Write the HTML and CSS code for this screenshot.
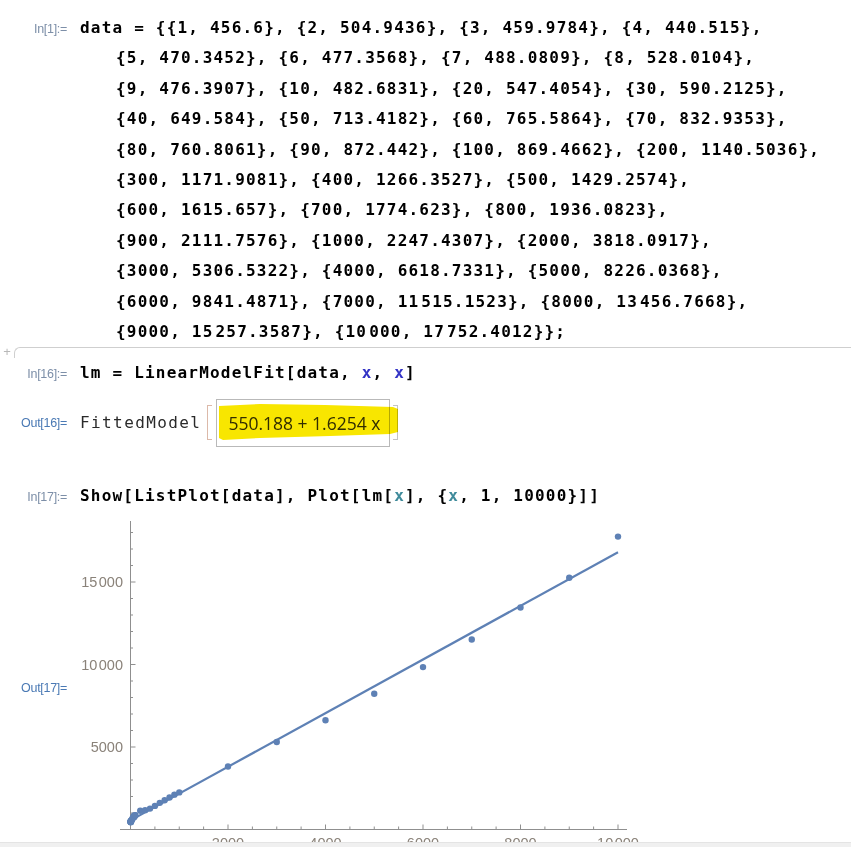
FILE: index.html
```html
<!DOCTYPE html>
<html>
<head>
<meta charset="utf-8">
<link rel="stylesheet" href="styles.css">
</head>
<body>
<div class="nb">
  <div class="row">
    <div class="lbl in">In[1]:=</div>
    <div class="code">
      <div class="ln">data = {{1, 456.6}, {2, 504.9436}, {3, 459.9784}, {4, 440.515},</div>
      <div class="ln cont">{5, 470.3452}, {6, 477.3568}, {7, 488.0809}, {8, 528.0104},</div>
      <div class="ln cont">{9, 476.3907}, {10, 482.6831}, {20, 547.4054}, {30, 590.2125},</div>
      <div class="ln cont">{40, 649.584}, {50, 713.4182}, {60, 765.5864}, {70, 832.9353},</div>
      <div class="ln cont">{80, 760.8061}, {90, 872.442}, {100, 869.4662}, {200, 1140.5036},</div>
      <div class="ln cont">{300, 1171.9081}, {400, 1266.3527}, {500, 1429.2574},</div>
      <div class="ln cont">{600, 1615.657}, {700, 1774.623}, {800, 1936.0823},</div>
      <div class="ln cont">{900, 2111.7576}, {1000, 2247.4307}, {2000, 3818.0917},</div>
      <div class="ln cont">{3000, 5306.5322}, {4000, 6618.7331}, {5000, 8226.0368},</div>
      <div class="ln cont">{6000, 9841.4871}, {7000, 11<span class="ts">515.1523</span>}, {8000, 13<span class="ts">456.7668</span>},</div>
      <div class="ln cont">{9000, 15<span class="ts">257.3587</span>}, {10<span class="ts">000</span>, 17<span class="ts">752.4012</span>}};</div>
    </div>
  </div>

  <div class="divider">
    <span class="plus">+</span>
    <span class="rule"></span>
  </div>

  <div class="row r16">
    <div class="lbl in">In[16]:=</div>
    <div class="code">
      <div class="ln">lm = LinearModelFit[data, <span class="gv">x</span>, <span class="gv">x</span>]</div>
    </div>
  </div>

  <div class="row out16">
    <div class="lbl out">Out[16]=</div>
    <div class="fm">
      <span class="fmname">FittedModel</span>
      <span class="brk lb"></span>
      <span class="fmbox">550.188 + 1.6254 x</span>
      <span class="brk rb"></span>
      <svg class="marker" width="200" height="50" viewBox="0 0 200 50">
        <path d="M3 7 L44 5 L109 6 L177 8 L182 10 L182 33 L174 35 L114 37 L44 39 L7 41 L3 39 Z" fill="#f8e600"/>
      </svg>
    </div>
  </div>

  <div class="row r17">
    <div class="lbl in">In[17]:=</div>
    <div class="code">
      <div class="ln">Show[ListPlot[data], Plot[lm[<span class="lv">x</span>], {<span class="lv">x</span>, 1, 10000}]]</div>
    </div>
  </div>

  <div class="row out17">
    <div class="lbl out">Out[17]=</div>
    <svg class="plot" width="560" height="340" viewBox="80 518 560 340">
      <g stroke="#8f8f8f" stroke-width="1" fill="none">
        <line x1="130.5" y1="521" x2="130.5" y2="830"/>
        <line x1="120" y1="829.5" x2="627" y2="829.5"/>
        <line x1="130.5" y1="813" x2="133" y2="813"/>
        <line x1="130.5" y1="796.5" x2="133" y2="796.5"/>
        <line x1="130.5" y1="780" x2="133" y2="780"/>
        <line x1="130.5" y1="763.5" x2="133" y2="763.5"/>
        <line x1="130.5" y1="747" x2="135.5" y2="747"/>
        <line x1="130.5" y1="730.5" x2="133" y2="730.5"/>
        <line x1="130.5" y1="714" x2="133" y2="714"/>
        <line x1="130.5" y1="697.5" x2="133" y2="697.5"/>
        <line x1="130.5" y1="681" x2="133" y2="681"/>
        <line x1="130.5" y1="664.5" x2="135.5" y2="664.5"/>
        <line x1="130.5" y1="648" x2="133" y2="648"/>
        <line x1="130.5" y1="631.5" x2="133" y2="631.5"/>
        <line x1="130.5" y1="615" x2="133" y2="615"/>
        <line x1="130.5" y1="598.5" x2="133" y2="598.5"/>
        <line x1="130.5" y1="582" x2="135.5" y2="582"/>
        <line x1="130.5" y1="565.5" x2="133" y2="565.5"/>
        <line x1="130.5" y1="549" x2="133" y2="549"/>
        <line x1="130.5" y1="532.5" x2="133" y2="532.5"/>
        <line x1="154.9" y1="829.5" x2="154.9" y2="826.5"/>
        <line x1="179.25" y1="829.5" x2="179.25" y2="826.5"/>
        <line x1="203.6" y1="829.5" x2="203.6" y2="826.5"/>
        <line x1="228" y1="829.5" x2="228" y2="824.5"/>
        <line x1="252.4" y1="829.5" x2="252.4" y2="826.5"/>
        <line x1="276.75" y1="829.5" x2="276.75" y2="826.5"/>
        <line x1="301.1" y1="829.5" x2="301.1" y2="826.5"/>
        <line x1="325.5" y1="829.5" x2="325.5" y2="824.5"/>
        <line x1="349.9" y1="829.5" x2="349.9" y2="826.5"/>
        <line x1="374.25" y1="829.5" x2="374.25" y2="826.5"/>
        <line x1="398.6" y1="829.5" x2="398.6" y2="826.5"/>
        <line x1="423" y1="829.5" x2="423" y2="824.5"/>
        <line x1="447.4" y1="829.5" x2="447.4" y2="826.5"/>
        <line x1="471.75" y1="829.5" x2="471.75" y2="826.5"/>
        <line x1="496.1" y1="829.5" x2="496.1" y2="826.5"/>
        <line x1="520.5" y1="829.5" x2="520.5" y2="824.5"/>
        <line x1="544.9" y1="829.5" x2="544.9" y2="826.5"/>
        <line x1="569.25" y1="829.5" x2="569.25" y2="826.5"/>
        <line x1="593.6" y1="829.5" x2="593.6" y2="826.5"/>
        <line x1="618" y1="829.5" x2="618" y2="824.5"/>
      </g>
      <g class="ticklbl">
        <text x="123" y="587" text-anchor="end">15<tspan dx="1.5">000</tspan></text>
        <text x="123" y="669.5" text-anchor="end">10<tspan dx="1.5">000</tspan></text>
        <text x="123" y="752" text-anchor="end">5000</text>
        <text x="228" y="848" text-anchor="middle">2000</text>
        <text x="325.5" y="848" text-anchor="middle">4000</text>
        <text x="423" y="848" text-anchor="middle">6000</text>
        <text x="520.5" y="848" text-anchor="middle">8000</text>
        <text x="618" y="848" text-anchor="middle">10<tspan dx="1.5">000</tspan></text>
      </g>
      <line x1="130.55" y1="820.4" x2="618" y2="552.2" stroke="#5e81b5" stroke-width="2.2"/>
      <g fill="#5e81b5">
        <circle cx="130.55" cy="821.97" r="3.2"/>
        <circle cx="130.6" cy="821.17" r="3.2"/>
        <circle cx="130.65" cy="821.91" r="3.2"/>
        <circle cx="130.7" cy="822.23" r="3.2"/>
        <circle cx="130.74" cy="821.74" r="3.2"/>
        <circle cx="130.79" cy="821.62" r="3.2"/>
        <circle cx="130.84" cy="821.45" r="3.2"/>
        <circle cx="130.89" cy="820.79" r="3.2"/>
        <circle cx="130.94" cy="821.64" r="3.2"/>
        <circle cx="130.99" cy="821.54" r="3.2"/>
        <circle cx="131.48" cy="820.47" r="3.2"/>
        <circle cx="131.96" cy="819.76" r="3.2"/>
        <circle cx="132.45" cy="818.78" r="3.2"/>
        <circle cx="132.94" cy="817.73" r="3.2"/>
        <circle cx="133.43" cy="816.87" r="3.2"/>
        <circle cx="133.91" cy="815.76" r="3.2"/>
        <circle cx="134.4" cy="816.95" r="3.2"/>
        <circle cx="134.89" cy="815.11" r="3.2"/>
        <circle cx="135.38" cy="815.15" r="3.2"/>
        <circle cx="140.25" cy="810.68" r="3.2"/>
        <circle cx="145.13" cy="810.16" r="3.2"/>
        <circle cx="150" cy="808.6" r="3.2"/>
        <circle cx="154.88" cy="805.92" r="3.2"/>
        <circle cx="159.75" cy="802.84" r="3.2"/>
        <circle cx="164.63" cy="800.22" r="3.2"/>
        <circle cx="169.5" cy="797.55" r="3.2"/>
        <circle cx="174.38" cy="794.66" r="3.2"/>
        <circle cx="179.25" cy="792.42" r="3.2"/>
        <circle cx="228" cy="766.5" r="3.2"/>
        <circle cx="276.75" cy="741.94" r="3.2"/>
        <circle cx="325.5" cy="720.29" r="3.2"/>
        <circle cx="374.25" cy="693.77" r="3.2"/>
        <circle cx="423" cy="667.12" r="3.2"/>
        <circle cx="471.75" cy="639.5" r="3.2"/>
        <circle cx="520.5" cy="607.46" r="3.2"/>
        <circle cx="569.25" cy="577.75" r="3.2"/>
        <circle cx="618" cy="536.59" r="3.2"/>
      </g>
    </svg>
  </div>
</div>
<div class="bottombar"></div>
</body>
</html>
```

FILE: styles.css
```css
html, body {
  margin: 0;
  padding: 0;
  background: #ffffff;
  overflow: hidden;
  height: 847px;
}

.nb {
  padding-top: 13px;
  font-family: "DejaVu Sans Mono", monospace;
}

.row {
  display: flex;
  align-items: baseline;
}

.lbl {
  width: 67px;
  flex: none;
  margin-right: 13px;
  text-align: right;
  font-family: "Liberation Sans", Arial, sans-serif;
  font-size: 12.5px;
  letter-spacing: -0.3px;
}

.lbl.in { color: #7d8fa8; }
.lbl.out { color: #4a79b4; }

.code {
  font-family: "DejaVu Sans Mono", monospace;
  font-weight: bold;
  font-size: 16px;
  letter-spacing: 1.2px;
  line-height: 30.4px;
  color: #000;
}

.ln { white-space: pre; }
.ln.cont { padding-left: 36px; }

.ts { margin-left: 2px; }

.gv { color: #3434c6; }
.lv { color: #3f8b9b; }

/* divider between cell groups */
.divider {
  height: 0;
  display: flex;
  align-items: flex-start;
}
.plus {
  width: 14px;
  flex: none;
  font-family: "Liberation Sans", Arial, sans-serif;
  font-size: 13px;
  line-height: 10px;
  color: #b8b8b8;
  text-align: center;
}
.rule {
  flex: 1;
  height: 10px;
  border-top: 1px solid #cfcfcf;
  border-left: 1px solid #cfcfcf;
  border-top-left-radius: 6px;
}

.r16 { margin-top: 11px; }

.out16 {
  margin-top: 10px;
  align-items: center;
}
.fm {
  display: flex;
  align-items: center;
  position: relative;
}
.fmname {
  font-family: "DejaVu Sans Mono", monospace;
  font-size: 16px;
  letter-spacing: 1.4px;
  color: #2a2a2a;
}
.brk {
  width: 4px;
  height: 33px;
  flex: none;
}
.lb {
  margin-left: 6px;
  margin-right: 4px;
  border: 1px solid #dcb9a9;
  border-right: none;
}
.rb {
  margin-left: 3px;
  border: 1px solid #c4c4c4;
  border-left: none;
}
.fmbox {
  border: 1px solid #b9b9b9;
  height: 48px;
  box-sizing: border-box;
  width: 174px;
  padding-left: 11px;
  display: flex;
  align-items: center;
  font-family: "Open Sans", sans-serif;
  font-size: 17.5px;
  letter-spacing: 0;
  color: #333;
}
.marker {
  position: absolute;
  left: 136px;
  top: 0;
  mix-blend-mode: multiply;
  pointer-events: none;
}

.r17 { margin-top: 34px; }

.out17 {
  margin-top: 7px;
  align-items: center;
}
.plot {
  display: block;
  flex: none;
}
.ticklbl {
  font-family: "Liberation Sans", Arial, sans-serif;
  font-size: 14.5px;
  fill: #8a8279;
}

.bottombar {
  position: fixed;
  left: 0;
  right: 0;
  bottom: 0;
  height: 4px;
  background: #f0f0f0;
  border-top: 1px solid #e4e4e4;
}
```
